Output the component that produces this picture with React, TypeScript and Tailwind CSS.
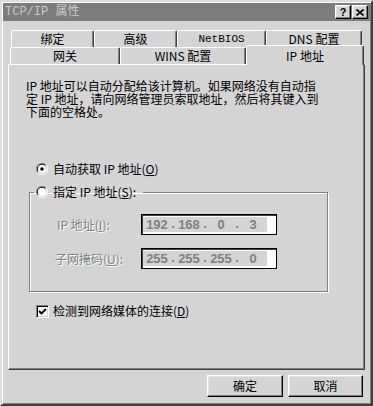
import React from "react";

const raised =
  "border border-t-white border-l-white border-r-black border-b-black shadow-[inset_-1px_-1px_0_#808080,inset_1px_1px_0_#e4e4e4]";

function Mn({ ch }: { ch: string }) {
  return <span className="underline underline-offset-[1px]">{ch}</span>;
}

function Tab({ w, label, mono }: { w: string; label: string; mono?: boolean }) {
  return (
    <div
      className={`${w} h-[17px] flex items-center justify-center rounded-t-[2px] border-t border-l border-r border-t-white border-l-white border-r-[#404040] shadow-[inset_-1px_0_0_#808080] ${
        mono ? "font-['Liberation_Mono','Noto_Sans_CJK_SC',monospace] text-[11px]" : ""
      }`}
    >
      {label}
    </div>
  );
}

function Radio({ checked }: { checked?: boolean }) {
  return (
    <svg width="12" height="12" viewBox="0 0 12 12" className="shrink-0">
      <path d="M10.5 2.5 A5.5 5.5 0 0 0 1.5 9.5" stroke="#808080" strokeWidth="1" fill="none" />
      <path d="M9.5 3 A4.3 4.3 0 0 0 2.4 8.6" stroke="#000" strokeWidth="1" fill="none" />
      <path d="M1.8 9.8 A5.5 5.5 0 0 0 10.2 2.2" stroke="#fff" strokeWidth="1" fill="none" />
      <circle cx="6" cy="6" r="4" fill="#fff" />
      {checked && <circle cx="6" cy="6" r="1.8" fill="#000" />}
    </svg>
  );
}

function IpBox({ parts }: { parts: string[] }) {
  return (
    <div className="w-[136px] h-[21px] bg-white border border-black shadow-[inset_1px_1px_0_#404040] flex items-center pl-[1px] font-['Liberation_Sans',sans-serif] font-bold text-[13px] text-[#808080]">
      {parts.map((p, i) => (
        <React.Fragment key={i}>
          <div className="w-[28px] h-[15px] bg-[#d4d4d4] flex items-center justify-center leading-none">
            {p}
          </div>
          {i < parts.length - 1 && (
            <div className="w-[4px] h-[15px] bg-[#d4d4d4] flex items-end justify-center leading-none pb-[2px]">
              .
            </div>
          )}
        </React.Fragment>
      ))}
    </div>
  );
}

export default function App() {
  return (
    <div className="w-[373px] h-[406px] bg-[#d4d4d4] border-2 border-t-[#dcdcdc] border-l-[#dcdcdc] border-r-[#404040] border-b-[#404040] shadow-[inset_1px_1px_0_#fff,inset_-1px_-1px_0_#808080] flex flex-col px-[1px] pt-[1px] font-['Noto_Sans_CJK_SC',sans-serif] text-[12px] leading-[12px] text-black select-none">
      {/* Title bar */}
      <div className="h-[18px] bg-[#7c7c7c] flex items-center pl-[2px] pr-[2px] shrink-0">
        <span className="flex-1 text-[#c8c8c8] font-['Liberation_Mono','Noto_Sans_CJK_SC',monospace] text-[12px]">
          TCP/IP 属性
        </span>
        <div className="flex gap-[1px]">
          <button className={`w-[16px] h-[14px] bg-[#d4d4d4] ${raised} flex items-center justify-center font-['Liberation_Sans',sans-serif] font-bold text-[11px] leading-none`}>
            ?
          </button>
          <button className={`w-[16px] h-[14px] bg-[#d4d4d4] ${raised} flex items-center justify-center`}>
            <svg width="8" height="7" viewBox="0 0 8 7">
              <path d="M0.5 0.5 L7.5 6.5 M7.5 0.5 L0.5 6.5" stroke="#000" strokeWidth="1.6" />
            </svg>
          </button>
        </div>
      </div>

      {/* Tabs */}
      <div className="mt-[9px] ml-[8px] flex">
        <Tab w="w-[83px]" label="绑定" />
        <Tab w="w-[83px]" label="高级" />
        <Tab w="w-[89px]" label="NetBIOS" mono />
        <Tab w="w-[96px]" label="DNS 配置" />
      </div>
      <div className="ml-[7px] flex items-start">
        <Tab w="w-[110px]" label="网关" />
        <Tab w="w-[126px]" label="WINS 配置" />
        <div className="relative z-10 w-[118px] h-[20px] -mt-[2px] -mb-[1px] bg-[#d4d4d4] rounded-t-[2px] border-t border-l border-r border-t-white border-l-white border-r-[#404040] shadow-[inset_-1px_0_0_#808080] flex justify-center pt-[4px]">
          IP 地址
        </div>
      </div>

      {/* Panel */}
      <div className="ml-[5px] w-[357px] h-[306px] border border-t-white border-l-white border-r-[#404040] border-b-[#404040] shadow-[inset_-1px_-1px_0_#808080] flex flex-col">
        <p className="ml-[17px] mt-[14px] leading-[13px]">
          IP 地址可以自动分配给该计算机。如果网络没有自动指
          <br />
          定 IP 地址，请向网络管理员索取地址，然后将其键入到
          <br />
          下面的空格处。
        </p>

        <div className="mt-[44px] ml-[27px] h-[14px] flex items-center gap-[5px]">
          <Radio checked />
          <span>
            自动获取 IP 地址(<Mn ch="O" />)
          </span>
        </div>

        <fieldset className="mt-[9px] ml-[20px] w-[299px] border border-[#808080] shadow-[1px_1px_0_#fff,inset_1px_1px_0_#fff] pb-[22px]">
          <legend className="ml-[4px] pl-[2px] pr-[7px]">
            <div className="h-[14px] flex items-center gap-[5px]">
              <Radio />
              <span>
                指定 IP 地址(<Mn ch="S" />):
              </span>
            </div>
          </legend>
          <div className="mt-[15px] ml-[27px] flex items-center">
            <span className="w-[84px] text-[#808080] [text-shadow:1px_1px_0_#fff]">
              IP 地址(<Mn ch="I" />):
            </span>
            <IpBox parts={["192", "168", "0", "3"]} />
          </div>
          <div className="mt-[13px] ml-[25px] flex items-center">
            <span className="w-[86px] text-[#808080] [text-shadow:1px_1px_0_#fff]">
              子网掩码(<Mn ch="U" />):
            </span>
            <IpBox parts={["255", "255", "255", "0"]} />
          </div>
        </fieldset>

        <div className="mt-[12px] ml-[27px] h-[14px] flex items-center gap-[4px]">
          <div className="w-[13px] h-[13px] bg-white border border-t-[#808080] border-l-[#808080] border-r-white border-b-white shadow-[inset_1px_1px_0_#000,inset_-1px_-1px_0_#d4d4d4] flex items-center justify-center">
            <svg width="9" height="9" viewBox="0 0 9 9">
              <path d="M1 4 L3.5 6.5 L8 2" stroke="#000" strokeWidth="1.8" fill="none" />
            </svg>
          </div>
          <span>
            检测到网络媒体的连接(<Mn ch="D" />)
          </span>
        </div>
      </div>

      {/* Buttons */}
      <div className="mt-[5px] flex justify-end gap-[5px] pr-[7px]">
        <button className={`w-[76px] h-[22px] bg-[#d4d4d4] ${raised} flex items-center justify-center text-[12px]`}>
          确定
        </button>
        <button className={`w-[75px] h-[22px] bg-[#d4d4d4] ${raised} flex items-center justify-center text-[12px]`}>
          取消
        </button>
      </div>
    </div>
  );
}
